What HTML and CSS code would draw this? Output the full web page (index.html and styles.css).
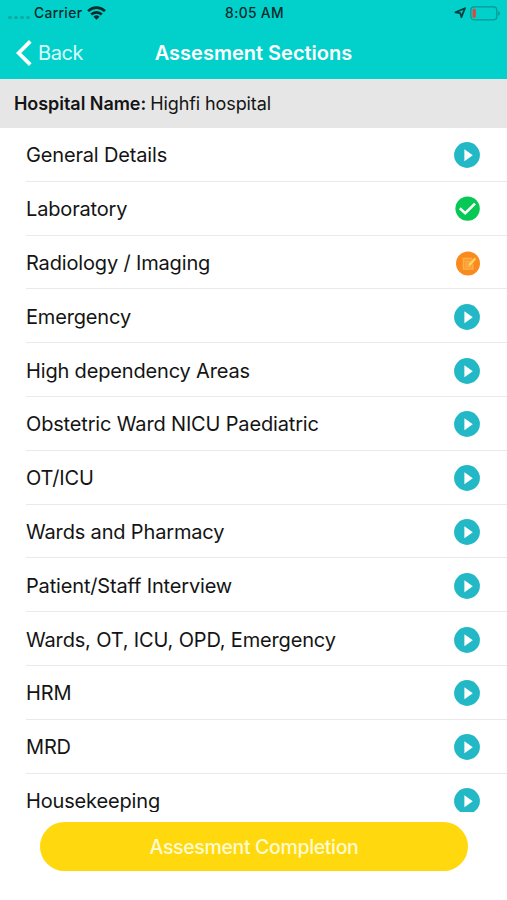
FILE: index.html
```html
<!DOCTYPE html>
<html lang="en">

<head>
  <meta charset="UTF-8" />
  <meta name="viewport" content="width=device-width, initial-scale=1.0" />
  <title>Assesment Sections</title>
  <link rel="stylesheet" href="styles.css">
</head>

<body>

  <!-- shared icons -->
  <svg class="sprite" width="0" height="0">
    <symbol id="play" viewBox="0 0 26 26">
      <circle cx="13" cy="13" r="12.9" fill="#22b8c6" />
      <path d="M10.4 7.2v12l8.4-6z" fill="#fff" />
    </symbol>
    <symbol id="done" viewBox="0 0 26 26">
      <circle cx="13.6" cy="12.6" r="12.2" fill="#05c855" />
      <path d="M5.8 12.2l5.4 5L21 7.6" fill="none" stroke="#fff" stroke-width="2.6" />
    </symbol>
    <symbol id="edit" viewBox="0 0 26 26">
      <circle cx="14" cy="13.6" r="12" fill="#fb8a1e" />
      <path d="M18 8.3H9.3v10.9h9.6v-5" fill="#fb9f35" stroke="#fdb24a" stroke-width="1.2" />
      <path d="M11 11.5h5M11 14h3.5M11 16.6h6" stroke="#fdae46" />
      <path d="M14.3 16.3l.7-2.7 5.5-6 1.7 1.6-5.4 6z" fill="#ffd45e" />
    </symbol>
  </svg>

  <header>
    <div class="status-bar">
      <div class="status-left">
        <span class="dots"><i></i><i></i><i></i><i></i></span>
        <span class="carrier">Carrier</span>
        <svg class="wifi" width="19" height="14" viewBox="0 0 19 14">
          <g fill="none" stroke="#062b2a" stroke-width="2.7">
            <path d="M1.1 5.1a12 12 0 0 1 16.8 0" />
            <path d="M4.2 8.5a7.6 7.6 0 0 1 10.6 0" />
          </g>
          <path d="M6.5 10.7a4.5 4.5 0 0 1 6 0l-3 3z" fill="#062b2a" />
        </svg>
      </div>
      <span class="time">8:05 AM</span>
      <div class="status-right">
        <svg width="12" height="12" viewBox="0 0 12 12">
          <path d="M11 1.2L7.4 10.2 6.3 6.2 1.4 5.4z" fill="none" stroke="#06403e" stroke-width="1.8" stroke-linejoin="round" />
        </svg>
        <svg width="31" height="15" viewBox="0 0 31 15">
          <rect x=".8" y=".8" width="26" height="13" rx="3.2" fill="none" stroke="#0b9692" stroke-width="1.3" />
          <rect x="2.6" y="2.8" width="3.2" height="9" rx="1.3" fill="#e8433a" />
          <path d="M28.2 5v4.8q1.7-.7 1.7-2.4T28.2 5z" fill="#0b9692" />
        </svg>
      </div>
    </div>
    <nav>
      <a class="back" href="#">
        <svg width="17" height="28" viewBox="0 0 17 28">
          <path d="M14.3 2.3L2.6 14l11.7 11.7" fill="none" stroke="#fff" stroke-width="3.8" />
        </svg>
        <span>Back</span>
      </a>
      <h1>Assesment Sections</h1>
    </nav>
  </header>

  <p class="hospital"><b>Hospital Name:</b> <span>Highfi hospital</span></p>

  <ul class="sections">
    <li><span>General Details</span><svg><use href="#play" /></svg></li>
    <li><span>Laboratory</span><svg><use href="#done" /></svg></li>
    <li><span>Radiology / Imaging</span><svg><use href="#edit" /></svg></li>
    <li><span>Emergency</span><svg><use href="#play" /></svg></li>
    <li><span>High dependency Areas</span><svg><use href="#play" /></svg></li>
    <li><span>Obstetric Ward NICU Paediatric</span><svg><use href="#play" /></svg></li>
    <li><span>OT/ICU</span><svg><use href="#play" /></svg></li>
    <li><span>Wards and Pharmacy</span><svg><use href="#play" /></svg></li>
    <li><span>Patient/Staff Interview</span><svg><use href="#play" /></svg></li>
    <li><span>Wards, OT, ICU, OPD, Emergency</span><svg><use href="#play" /></svg></li>
    <li><span>HRM</span><svg><use href="#play" /></svg></li>
    <li><span>MRD</span><svg><use href="#play" /></svg></li>
    <li><span>Housekeeping</span><svg><use href="#play" /></svg></li>
  </ul>

  <footer>
    <button type="button">Assesment Completion</button>
  </footer>

</body>

</html>
```
FILE: styles.css
```css
* {
  box-sizing: border-box;
}

body {
  margin: 0;
  height: 900px;
  overflow: hidden;
  display: flex;
  flex-direction: column;
  background: #fff;
  color: #141414;
  font-family: Inter, "Liberation Sans", sans-serif;
}

.sprite {
  position: absolute;
}

header {
  height: 79px;
  flex: none;
  background: #02d1cb;
}

.status-bar {
  height: 26px;
  padding: 0 6px 0 8px;
  display: grid;
  grid-template-columns: 1fr auto 1fr;
  align-items: center;
  color: #062b2a;
  font-size: 13.8px;
  font-weight: 500;
  line-height: 16px;
  letter-spacing: 0.35px;
}

.status-left,
.status-right {
  display: flex;
  align-items: center;
}

.status-right {
  justify-content: flex-end;
  gap: 4px;
}

.dots {
  display: flex;
  gap: 2px;
  margin: 8px 4px 0 0;
}

.dots i {
  width: 4px;
  height: 3px;
  border-radius: 2px;
  background: #10aaa6;
}

.wifi {
  margin-left: 5px;
}

nav {
  height: 53px;
  padding: 0 16px;
  display: grid;
  grid-template-columns: 1fr auto 1fr;
  align-items: center;
  color: #fff;
}

.back {
  display: flex;
  align-items: center;
  gap: 5px;
  color: #d9fbf9;
  font-size: 20px;
  letter-spacing: -0.4px;
  text-decoration: none;
}

h1 {
  margin: 0;
  font-size: 20px;
  font-weight: 600;
}

.hospital {
  height: 49px;
  flex: none;
  margin: 0;
  padding-left: 14px;
  background: #e6e6e6;
  font-size: 18px;
  line-height: 49px;
}

.hospital b {
  font-weight: 600;
  letter-spacing: -0.05px;
}

.hospital span {
  margin-left: -1px;
  letter-spacing: -0.1px;
}

.sections {
  height: 684px;
  flex: none;
  margin: 0;
  padding: 0 0 0 26px;
  overflow: hidden;
  list-style: none;
  font-size: 20px;
  letter-spacing: -0.16px;
}

.sections li {
  height: 53.8px;
  padding: 2px 27px 0 0;
  display: flex;
  align-items: center;
  justify-content: space-between;
  border-bottom: 1px solid #e9e9e9;
}

.sections svg {
  width: 26px;
  height: 26px;
}

footer {
  padding: 10px 39px 0 40px;
}

footer button {
  width: 100%;
  height: 49px;
  border: none;
  border-radius: 25px;
  background: #ffd80e;
  color: #fffbd0;
  font-family: inherit;
  font-size: 19.5px;
  font-weight: 500;
  letter-spacing: -0.35px;
}
```
